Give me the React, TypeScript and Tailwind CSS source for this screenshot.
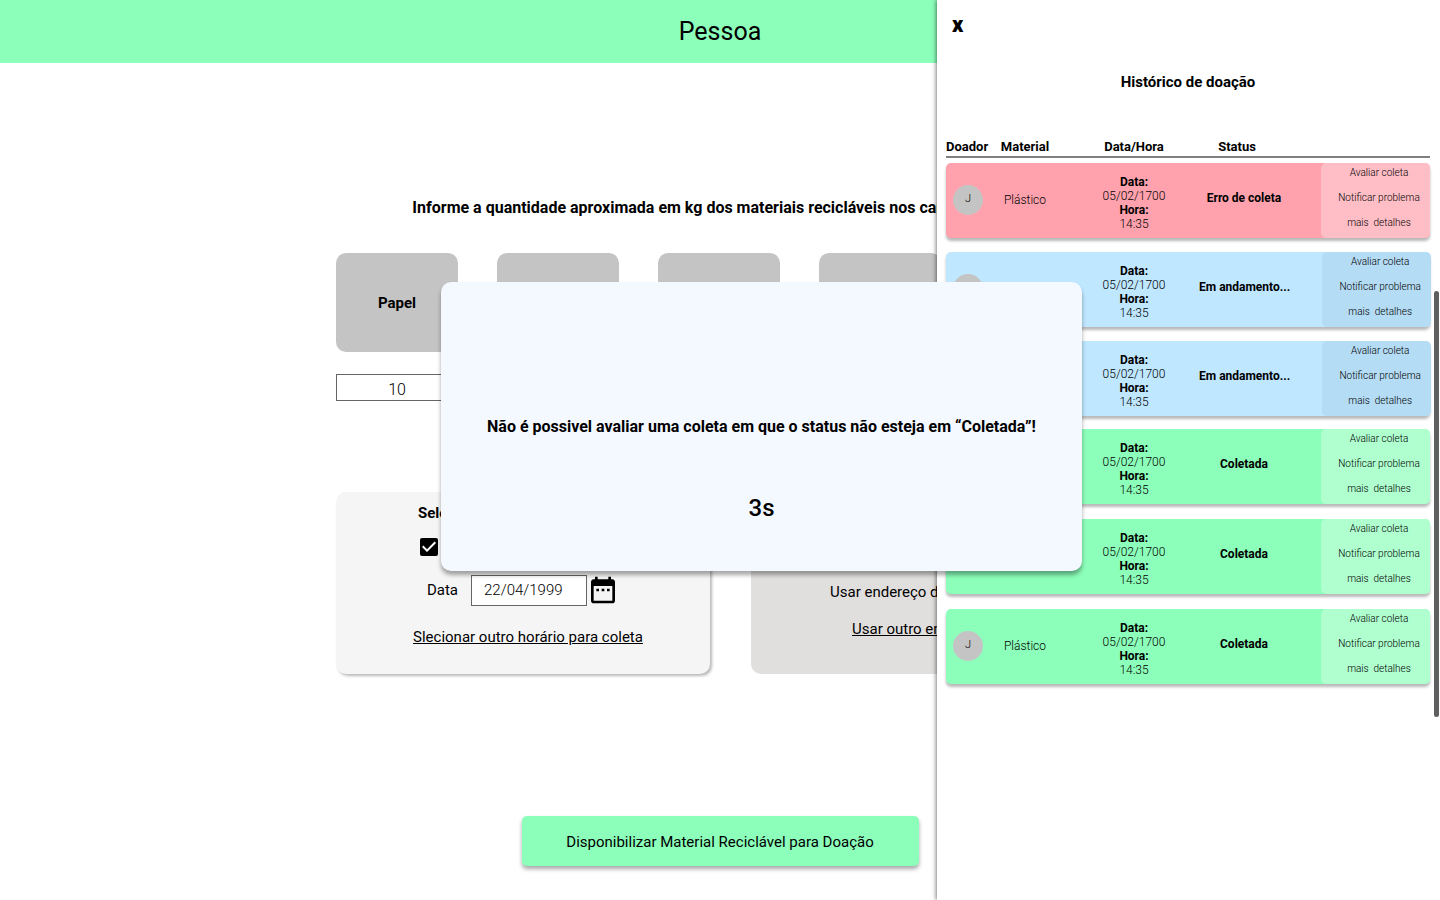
type Tone = "error" | "progress" | "done";

const tones: Record<Tone, { row: string; pane: string; label: string; body: string }> = {
  error: { row: "bg-[#ffa2ad]", pane: "bg-[#ffbec6]", label: "Erro de coleta", body: "mb-3.5 gap-3.5" },
  progress: { row: "bg-[#bfe7ff]", pane: "bg-[#b4dcf4]", label: "Em andamento...", body: "mb-[13px] gap-3.5" },
  done: { row: "bg-[#8cffba]", pane: "bg-[#afffcf]", label: "Coletada", body: "mb-3.5 gap-[15px]" },
};

const groups: { tone: Tone; ids: number[] }[] = [
  { tone: "error", ids: [1] },
  { tone: "progress", ids: [2, 3] },
  { tone: "done", ids: [4, 5, 6] },
];

const materials = [
  { name: "Papel", amount: "10" },
  { name: "Plástico", amount: "0" },
  { name: "Vidro", amount: "0" },
  { name: "Metal", amount: "0" },
];

const columns = "grid grid-cols-[44px_79px_130px_1fr_109px]";

function DonationRow({ tone }: { tone: Tone }) {
  const t = tones[tone];
  return (
    <tr className={`${columns} h-[75px] rounded-[5px] shadow-[0_3px_3px_rgba(0,0,0,0.28)] ${t.row}`}>
      <td className="flex items-center justify-center pb-0.5">
        <span className="flex size-[30px] items-center justify-center rounded-full bg-[#c4c4c4] text-[11px] font-light">J</span>
      </td>
      <td className="flex items-center justify-center pr-[9px] pb-0.5 text-xs font-light">Plástico</td>
      <td className="flex flex-col justify-center pt-1 text-center text-xs leading-[14px] font-light">
        <strong className="font-bold">Data:</strong>
        <span>05/02/1700</span>
        <strong className="font-bold">Hora:</strong>
        <span>14:35</span>
      </td>
      <td className="flex items-center justify-center pr-8 pb-1.5 text-xs font-bold whitespace-nowrap">{t.label}</td>
      <td className={`flex flex-col items-center rounded-[5px] pl-[7px] text-[10px] font-light ${t.pane}`}>
        <button type="button" className="h-[25px] pb-1.5 whitespace-nowrap">Avaliar coleta</button>
        <button type="button" className="h-[25px] pb-1.5 whitespace-nowrap">Notificar problema</button>
        <button type="button" className="h-[25px] pb-1.5 whitespace-pre">mais  detalhes</button>
      </td>
    </tr>
  );
}

function HistoryDrawer() {
  return (
    <aside className="absolute inset-y-0 right-0 w-[503px] bg-white pr-2.5 pl-[9px] shadow-[-1px_0_4px_rgba(0,0,0,0.5)]">
      <button type="button" aria-label="Fechar" className="ml-1.5 block pt-2.5 text-[22px] leading-[30px] font-black">x</button>
      <h2 className="mt-8 text-center text-[15px] leading-5 font-bold">Histórico de doação</h2>
      <table className="mt-[45px] block">
        <thead className="mb-[5px] block border-b-2 border-[#808080]">
          <tr className={`${columns} h-[19px] text-[13px] leading-5 font-bold`}>
            <th className="text-left font-bold">Doador</th>
            <th className="pr-[9px] font-bold">Material</th>
            <th className="font-bold">Data/Hora</th>
            <th className="pr-[46px] font-bold">Status</th>
            <th aria-label="Ações" />
          </tr>
        </thead>
        {groups.map((g) => (
          <tbody key={g.tone} className={`flex flex-col ${tones[g.tone].body}`}>
            {g.ids.map((id) => (
              <DonationRow key={id} tone={g.tone} />
            ))}
          </tbody>
        ))}
      </table>
      <div className="absolute top-[291px] right-px h-[426px] w-[5px] rounded-full bg-[#5f5f5f]" />
    </aside>
  );
}

function Notice() {
  return (
    <div className="absolute inset-0 flex items-center justify-center pb-[47px] pl-[83px]">
      <div role="alertdialog" aria-label="Aviso" className="flex h-[289px] w-[641px] flex-col items-center rounded-[10px] bg-[#f4f8ff] pt-[133px] shadow-[0_4px_4px_rgba(0,0,0,0.35)]">
        <p className="text-base leading-6 font-bold">Não é possivel avaliar uma coleta em que o status não esteja em “Coletada”!</p>
        <p className="mt-[53px] text-2xl leading-8 font-medium">3s</p>
      </div>
    </div>
  );
}

export default function App() {
  return (
    <div className="relative min-h-screen overflow-hidden bg-white font-['Roboto',sans-serif] text-black">
      <header className="flex h-[63px] items-center justify-center bg-[#8cffba]">
        <h1 className="pt-px text-[25px] leading-8">Pessoa</h1>
      </header>

      <main className="mx-auto max-w-3xl pt-[133px]">
        <h2 className="text-center text-base leading-6 font-bold whitespace-nowrap">
          Informe a quantidade aproximada em kg dos materiais recicláveis nos campos abaixo
        </h2>

        <div className="mt-[33px] flex gap-[39px]">
          {materials.map((m) => (
            <label key={m.name} className="flex w-[122px] flex-col">
              <span className="flex h-[99px] items-center justify-center rounded-[10px] bg-[#c4c4c4] pt-0.5 text-[15px] font-bold">{m.name}</span>
              <input
                type="text"
                defaultValue={m.amount}
                className="mt-[22px] h-[27px] w-full border border-[#666] bg-white pt-1 text-center text-base font-light"
              />
            </label>
          ))}
        </div>

        <div className="mt-[91px] grid grid-cols-[374px_1fr] gap-[41px]">
          <section className="rounded-[10px] bg-[#f5f5f5] pt-[11px] pb-[27px] text-[15px] leading-5 shadow-[2px_2px_3px_rgba(0,0,0,0.28)]">
            <h3 className="pl-[82px] font-bold">Selecione horário para coleta</h3>
            <label className="mt-3 flex h-6 items-center gap-2 pl-[84px]">
              <span className="relative size-[18px]">
                <input type="checkbox" defaultChecked className="block size-[18px] appearance-none rounded-xs bg-black" />
                <svg viewBox="3 3 18 18" className="pointer-events-none absolute inset-0 size-[18px]" fill="#fff" aria-hidden="true">
                  <path d="M10 17l-5-5 1.41-1.41L10 14.17l7.59-7.59L19 8z" />
                </svg>
              </span>
              Horário comercial
            </label>
            <div className="mt-[15px] flex h-8 items-center justify-center">
              <label htmlFor="data" className="mr-[13px]">Data</label>
              <input
                id="data"
                type="text"
                defaultValue="22/04/1999"
                className="h-[31px] w-[116px] border border-[#666] bg-white pl-3 text-[15px] font-light"
              />
              <svg viewBox="0 0 24 24" className="size-8" aria-hidden="true">
                <path d="M9 11H7v2h2v-2zm4 0h-2v2h2v-2zm4 0h-2v2h2v-2zm2-7h-1V2h-2v2H8V2H6v2H5c-1.11 0-1.99.9-1.99 2L3 20c0 1.1.89 2 2 2h14c1.1 0 2-.9 2-2V6c0-1.1-.9-2-2-2zm0 16H5V9h14v11z" />
              </svg>
            </div>
            <p className="mt-[21px] pl-2.5 text-center">
              <a href="#horario" className="underline">Slecionar outro horário para coleta</a>
            </p>
          </section>

          <section className="rounded-[10px] bg-[#e1dfdd] pt-[11px] text-[15px] leading-5">
            <h3 className="pl-[79px] font-bold">Selecione o endereço</h3>
            <p className="mt-[59px] pl-[79px]">Usar endereço de cadastro</p>
            <p className="mt-[17px] pl-[101px]">
              <a href="#endereco" className="underline">Usar outro endereço</a>
            </p>
          </section>
        </div>

        <div className="mt-[142px] flex justify-center pb-[34px]">
          <button type="button" className="h-[50px] w-[397px] rounded-[5px] bg-[#8cffba] pt-0.5 text-[15px] shadow-[0_3px_4px_rgba(0,0,0,0.35)]">
            Disponibilizar Material Reciclável para Doação
          </button>
        </div>
      </main>

      <HistoryDrawer />
      <Notice />
    </div>
  );
}
